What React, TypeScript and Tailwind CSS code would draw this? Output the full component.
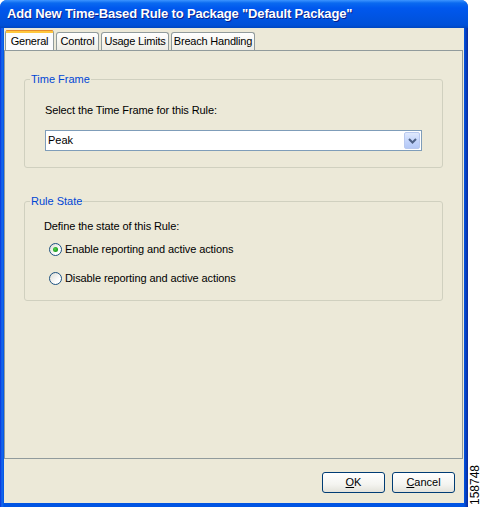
import React from "react";

const F = { fontFamily: '"Liberation Sans", Arial, sans-serif' };

function Radio({ checked, label }: { checked?: boolean; label: string }) {
  return (
    <div className="flex items-center h-[16px]">
      <div className="w-[13px] h-[13px] rounded-full border border-[#1c5180] bg-[linear-gradient(135deg,#dcdcd5,#ffffff_70%)] flex items-center justify-center">
        {checked && (
          <div className="w-[5px] h-[5px] rounded-full bg-[radial-gradient(circle_at_40%_40%,#55d551,#21a121_60%,#1a8a1a)]" />
        )}
      </div>
      <span className="ml-[3px] text-[11px] text-black leading-[13px] tracking-[-0.1px]">{label}</span>
    </div>
  );
}

function Tab({ label, active, w }: { label: string; active?: boolean; w: string }) {
  if (active) {
    return (
      <div
        className={`${w} h-[20px] relative z-10 -mb-[1px] bg-[#fcfcfe] border-x border-[#919b9c] rounded-t-[3px] flex flex-col`}
      >
        <div className="h-[1px] bg-[#e68b2c] rounded-t-[3px]" />
        <div className="h-[2px] bg-[#ffc73c]" />
        <div className="flex-1 flex items-center justify-center text-[11px] text-black pb-[1px] tracking-[-0.2px]">{label}</div>
      </div>
    );
  }
  return (
    <div
      className={`${w} h-[18px] mt-[2px] border border-b-0 border-[#919b9c] rounded-t-[3px] bg-[linear-gradient(to_bottom,#ffffff,#f3f2ec_70%,#ecebe5)] flex items-center justify-center text-[11px] text-black tracking-[-0.2px]`}
    >
      {label}
    </div>
  );
}

export default function App() {
  return (
    <div className="w-[482px] h-[507px] bg-white flex" style={F}>
      <div className="w-[468px] h-[507px] flex flex-col rounded-t-[7px] bg-[linear-gradient(to_right,#0831d9,#166aee_2px,#0054e3_4px,#0054e3_calc(100%-4px),#0a2a9c)] overflow-hidden">
        {/* Title bar */}
        <div className="h-[28px] shrink-0 flex items-center pl-[7px] bg-[linear-gradient(to_bottom,#3d95ff,#0a6af0_3px,#0058ee_8px,#0054e3_60%,#0050d8_90%,#0046c0)]">
          <span className="text-white font-bold text-[13px] tracking-[-0.15px] [text-shadow:1px_1px_0_#0a1f8a]">
            Add New Time-Based Rule to Package "Default Package"
          </span>
        </div>
        {/* Body */}
        <div className="flex-1 mx-[4px] mb-[4px] bg-[#ece9d8] flex flex-col">
          {/* tabs */}
          <div className="flex items-start pt-[2px] pl-[1px] gap-[2px]">
            <Tab label="General" active w="w-[49px]" />
            <Tab label="Control" w="w-[43px]" />
            <Tab label="Usage Limits" w="w-[68px]" />
            <Tab label="Breach Handling" w="w-[84px]" />
          </div>
          {/* panel */}
          <div className="h-[409px] mr-[1px] border border-[#919b9c] bg-[#ece9d8] px-[19px] pt-[22px]">
            <fieldset className="border border-[#d0d0bf] rounded-[3px] h-[95px]">
              <legend className="ml-[5px] px-[1px] text-[11px] leading-[13px] text-[#0046d5]">Time Frame</legend>
              <div className="px-[20px]">
                <div className="text-[11px] leading-[13px] text-black mt-[18px] tracking-[-0.1px]">Select the Time Frame for this Rule:</div>
                <div className="mt-[13px] h-[21px] border border-[#7f9db9] bg-white flex items-center">
                  <span className="flex-1 pl-[2px] text-[11px] text-black">Peak</span>
                  <div className="w-[16px] h-[17px] mr-[1px] rounded-[2px] border border-[#b9c9ef] bg-[linear-gradient(to_bottom,#e0e9fd,#c1d3fb_60%,#b4c8f6)] flex items-center justify-center">
                    <svg width="9" height="6" viewBox="0 0 9 6">
                      <path d="M1 1 L4.5 4.5 L8 1" stroke="#4d6185" strokeWidth="2" fill="none" />
                    </svg>
                  </div>
                </div>
              </div>
            </fieldset>
            <fieldset className="mt-[27px] border border-[#d0d0bf] rounded-[3px] h-[106px]">
              <legend className="ml-[5px] px-[1px] text-[11px] leading-[13px] text-[#0046d5]">Rule State</legend>
              <div className="px-[19px]">
                <div className="text-[11px] leading-[13px] text-black mt-[12px] tracking-[-0.1px]">Define the state of this Rule:</div>
                <div className="mt-[8px] pl-[5px] flex flex-col gap-[13px]">
                  <Radio checked label="Enable reporting and active actions" />
                  <Radio label="Disable reporting and active actions" />
                </div>
              </div>
            </fieldset>
          </div>
          {/* buttons */}
          <div className="flex-1 flex justify-end items-start pt-[13px] pr-[9px] gap-[7px]">
            <button className="w-[63px] h-[21px] rounded-[3px] border border-[#003c74] bg-[linear-gradient(to_bottom,#ffffff,#f4f4f0_60%,#e3e2da)] text-[11px] text-black">
              <span className="underline">O</span>K
            </button>
            <button className="w-[63px] h-[21px] rounded-[3px] border border-[#003c74] bg-[linear-gradient(to_bottom,#ffffff,#f4f4f0_60%,#e3e2da)] text-[11px] text-black">
              <span className="underline">C</span>ancel
            </button>
          </div>
        </div>
      </div>
      <div className="w-[14px] flex items-end justify-center pb-[2px]">
        <span className="[writing-mode:vertical-rl] rotate-180 text-[12px] text-black leading-[12px]">158748</span>
      </div>
    </div>
  );
}
